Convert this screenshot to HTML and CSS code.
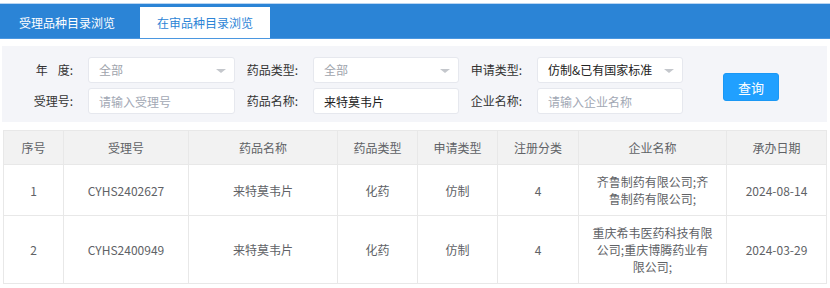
FILE: index.html
```html
<!DOCTYPE html>
<html lang="zh-CN">

<head>
  <meta charset="UTF-8">
  <meta name="viewport" content="width=device-width, initial-scale=1.0">
  <title>在审品种目录浏览</title>
  <link rel="stylesheet" href="styles.css">
</head>

<body>
  <!-- Tabs -->
  <div class="tabs">
    <div class="tab">受理品种目录浏览</div>
    <div class="tab active">在审品种目录浏览</div>
  </div>

  <!-- Search form -->
  <div class="searchPanel">
    <label class="fieldLabel">年<span class="gap"></span>度:</label>
    <div class="select muted">全部</div>
    <label class="fieldLabel">药品类型:</label>
    <div class="select muted">全部</div>
    <label class="fieldLabel">申请类型:</label>
    <div class="select">仿制&amp;已有国家标准</div>
    <div class="buttonCell">
      <button class="searchButton">查询</button>
    </div>

    <label class="fieldLabel">受理号:</label>
    <input class="textInput" type="text" placeholder="请输入受理号">
    <label class="fieldLabel">药品名称:</label>
    <input class="textInput" type="text" value="来特莫韦片">
    <label class="fieldLabel">企业名称:</label>
    <input class="textInput" type="text" placeholder="请输入企业名称">
  </div>

  <!-- Results -->
  <table class="resultTable">
    <colgroup>
      <col style="width: 60px">
      <col style="width: 125px">
      <col style="width: 149px">
      <col style="width: 80px">
      <col style="width: 80px">
      <col style="width: 81px">
      <col style="width: 148px">
      <col style="width: 100px">
    </colgroup>
    <thead>
      <tr>
        <th>序号</th>
        <th>受理号</th>
        <th>药品名称</th>
        <th>药品类型</th>
        <th>申请类型</th>
        <th>注册分类</th>
        <th>企业名称</th>
        <th>承办日期</th>
      </tr>
    </thead>
    <tbody>
      <tr>
        <td>1</td>
        <td>CYHS2402627</td>
        <td>来特莫韦片</td>
        <td>化药</td>
        <td>仿制</td>
        <td>4</td>
        <td>齐鲁制药有限公司;齐鲁制药有限公司;</td>
        <td>2024-08-14</td>
      </tr>
      <tr>
        <td>2</td>
        <td>CYHS2400949</td>
        <td>来特莫韦片</td>
        <td>化药</td>
        <td>仿制</td>
        <td>4</td>
        <td>重庆希韦医药科技有限公司;重庆博腾药业有限公司;</td>
        <td>2024-03-29</td>
      </tr>
    </tbody>
  </table>
</body>

</html>
```

FILE: styles.css
```css
body {
  margin: 0;
  font-family: "Noto Sans CJK SC", "Liberation Sans", sans-serif;
  font-size: 12px;
  color: #606266;
  background-color: #ffffff;
}

/* Tabs */
.tabs {
  display: flex;
  align-items: flex-end;
  gap: 8px;
  margin-top: 3px;
  padding-left: 2px;
  height: 34px;
  border-top: 1px solid #b9d5f2;
  border-bottom: 1px solid #4b97e0;
  background-color: #2b84d6;
}

.tab {
  width: 130px;
  height: 31px;
  line-height: 31px;
  text-align: center;
  color: #ffffff;
}

.tab.active {
  background-color: #ffffff;
  color: #2b84d6;
}

/* Search form */
.searchPanel {
  display: grid;
  grid-template-columns: 86px 147px 78px 146px 78px 146px auto;
  grid-template-rows: 26px 26px;
  row-gap: 5px;
  margin: 7px 3px 0 2px;
  padding: 11px 0 8px;
  background-color: #f4f5f9;
}

.fieldLabel {
  padding-right: 15px;
  line-height: 26px;
  text-align: right;
  color: #333333;
}

.gap {
  display: inline-block;
  width: 10px;
}

.select,
.textInput {
  box-sizing: border-box;
  height: 26px;
  margin: 0;
  padding: 0 10px;
  border: 1px solid #e6e8ee;
  border-radius: 3px;
  background-color: #ffffff;
  font-family: inherit;
  font-size: 12px;
  color: #222222;
  outline: none;
}

.select {
  position: relative;
  padding-right: 28px;
  line-height: 24px;
  white-space: nowrap;
  overflow: hidden;
}

.select.muted {
  color: #a0a4ac;
}

.select::after {
  content: "";
  position: absolute;
  right: 8px;
  top: 11px;
  border-left: 5px solid transparent;
  border-right: 5px solid transparent;
  border-top: 4px solid #c4c7cc;
}

.textInput::placeholder {
  color: #a2a8b4;
}

.buttonCell {
  grid-column: 7;
  grid-row: 1 / span 2;
  padding-left: 40px;
  padding-top: 16px;
}

.searchButton {
  width: 56px;
  height: 28px;
  border: 1px solid #1a98f5;
  border-radius: 3px;
  background-color: #20a0ff;
  color: #ffffff;
  font-family: inherit;
  font-size: 13px;
}

/* Results */
.resultTable {
  table-layout: fixed;
  width: 823px;
  margin: 8px 0 0 3px;
  border-collapse: collapse;
  border: 1px solid #e8e8e8;
}

.resultTable th,
.resultTable td {
  padding: 8px 13px;
  line-height: 17px;
  border: 1px solid #e8e8e8;
  text-align: center;
  font-weight: normal;
}

.resultTable th {
  height: 17px;
  background-color: #f2f2f2;
  color: #606266;
}

.resultTable td {
  color: #606266;
}
```
